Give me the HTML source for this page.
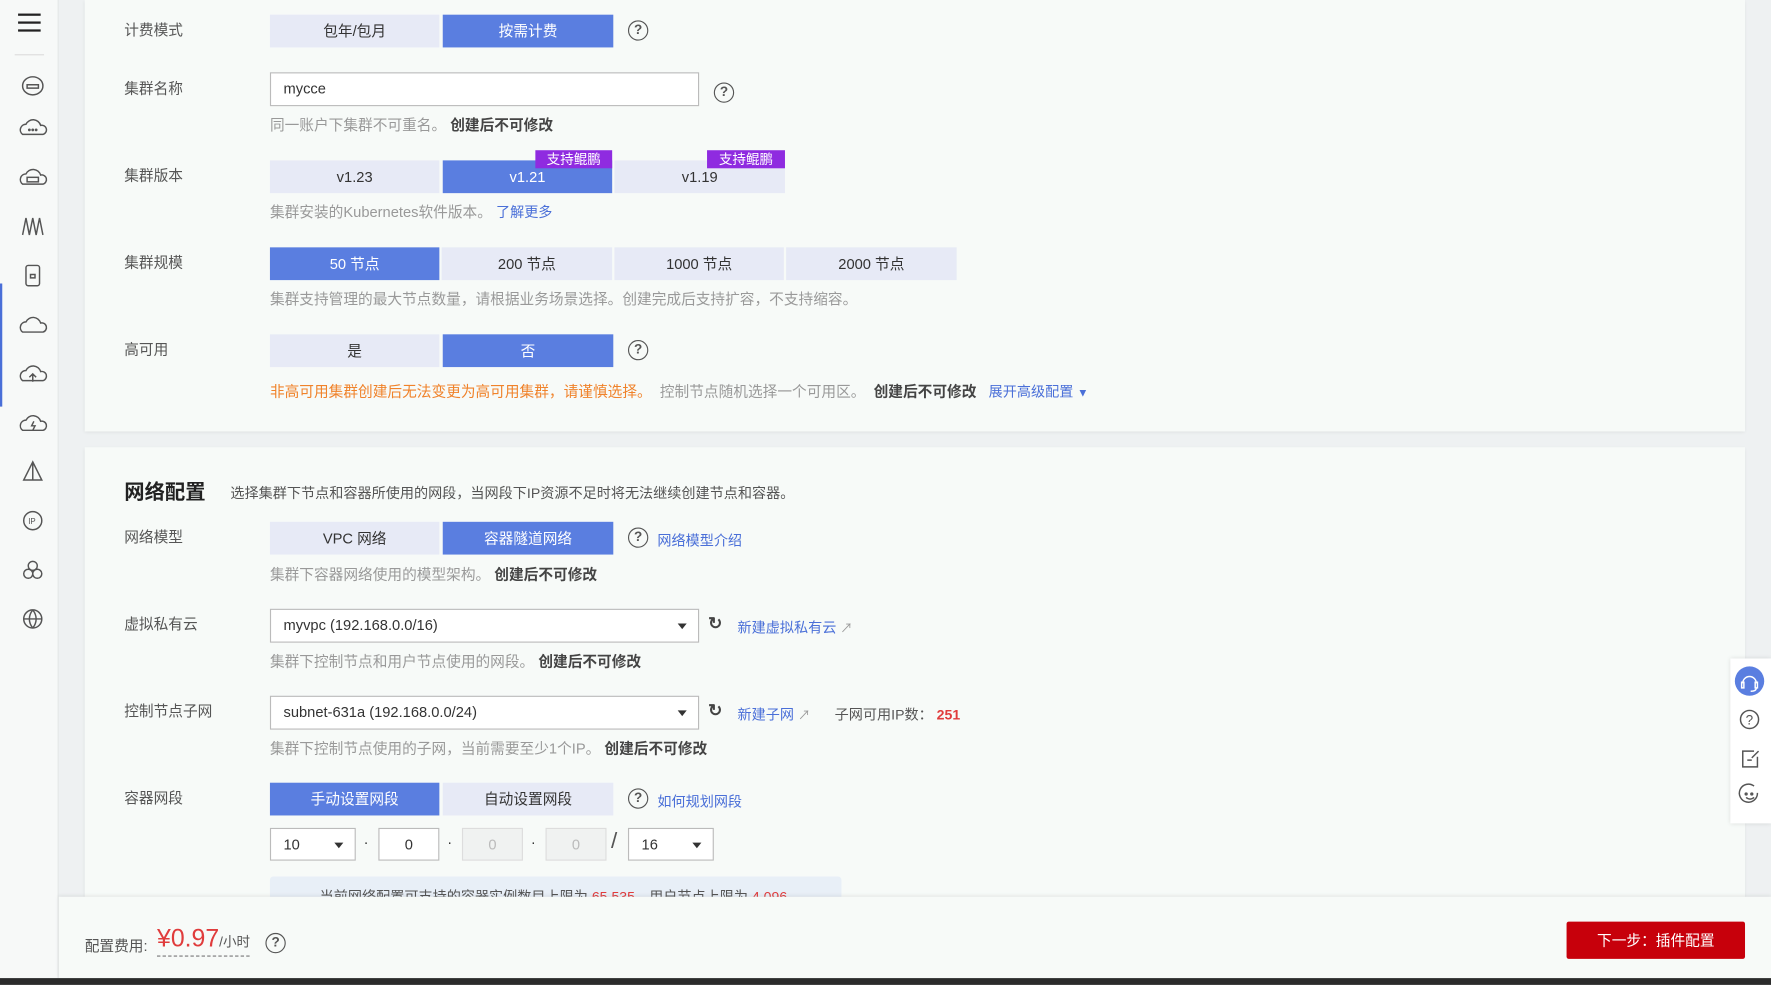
<!DOCTYPE html>
<html><head><meta charset="utf-8"><style>
*{box-sizing:border-box;margin:0;padding:0}
html,body{width:1771px;height:985px;overflow:hidden;background:#eef1f2}
#w{position:absolute;left:0;top:0;width:1568px;height:872px;transform:scale(1.12946);transform-origin:0 0;font-family:"Liberation Sans","Noto Sans CJK SC",sans-serif;font-size:13px;color:#333}
.a{position:absolute}
.card{position:absolute;left:75px;width:1470px;background:#f7faf8;box-shadow:0 1px 3px rgba(0,0,0,.08)}
.lbl{position:absolute;left:110px;color:#555;font-size:13px;line-height:16px}
.b{position:absolute;height:29px;line-height:29px;text-align:center;background:#e7eaf6;color:#333;font-size:13px}
.b.on{background:#5a7ee0;color:#fff}
.hint{position:absolute;left:239px;color:#999;font-size:13px;line-height:16px;white-space:nowrap}
.hint b{color:#444}
.lk{color:#4a6fd8;font-size:12.5px}
.q{position:absolute;width:18px;height:18px;border:1.5px solid #555;border-radius:50%;font-size:12px;line-height:15px;text-align:center;color:#555;font-weight:bold}
.inp{position:absolute;height:30px;border:1px solid #bbb;background:#fff;padding-left:11px;line-height:28px;font-size:13px}
.tag{position:absolute;height:16px;line-height:16px;background:#8f2be0;color:#fff;font-size:12px;text-align:center;width:68px}
.ar{position:absolute;right:10px;top:12px;border-left:4px solid transparent;border-right:4px solid transparent;border-top:5px solid #333}
</style></head><body><div id="w">
<div class="a" style="left:0;top:0;width:52px;height:866px;background:#f7f9f8;border-right:1px solid #e3e6e6"></div>
<div class="a" style="left:16px;top:12px;width:20px;height:2px;background:#222;box-shadow:0 7px 0 #222,0 14px 0 #222"></div>
<div class="a" style="left:13px;top:48px;width:26px;height:1px;background:#ddd"></div>
<div class="a" style="left:0;top:251px;width:2px;height:109px;background:#4a6fd8"></div>
<svg class="a" style="left:0;top:0" width="52" height="560" fill="none" stroke="#555" stroke-width="1.3">
<path d="M20 76a9 8 0 0 1 18 0a9 8 0 0 1-18 0zM24 75h10v3h-10z"/>
<path d="M20 119a5 5 0 0 1 3-9a7 7 0 0 1 13 1a4 4 0 0 1 2 8z"/><circle cx="26" cy="115" r=".6"/><circle cx="29" cy="115" r=".6"/><circle cx="32" cy="115" r=".6"/>
<path d="M20 163a5 5 0 0 1 3-9a7 7 0 0 1 13 1a4 4 0 0 1 2 8z"/><rect x="24" y="157" width="10" height="4"/>
<path d="M20 208l3-15 3 15 3-15 3 15 3-15 3 15"/>
<rect x="23" y="235" width="12" height="18" rx="2"/><path d="M27 246h4v-3h-4z"/>
<path d="M20 294a5 5 0 0 1 3-9a7 7 0 0 1 13 1a4 4 0 0 1 2 8z"/>
<path d="M20 337a5 5 0 0 1 3-9a7 7 0 0 1 13 1a4 4 0 0 1 2 8z M29 338v-7m-3 3l3-3 3 3"/>
<path d="M20 381a5 5 0 0 1 3-9a7 7 0 0 1 13 1a4 4 0 0 1 2 8z M30 373l-2 4h3l-2 4"/>
<path d="M29 409l-8 16h16z M29 409v16"/>
<circle cx="29" cy="461" r="8"/><text x="25" y="464" font-size="7" fill="#555" stroke="none">IP</text>
<circle cx="25" cy="508" r="4"/><circle cx="33" cy="508" r="4"/><circle cx="29" cy="501" r="4"/>
<circle cx="29" cy="548" r="8"/><path d="M21 548h16M29 540c-4 5-4 11 0 16M29 540c4 5 4 11 0 16"/>
</svg>
<div class="card" style="top:0;height:382px"></div>
<div class="lbl" style="top:19px">计费模式</div>
<div class="b" style="left:239px;top:13px;width:150px">包年/包月</div>
<div class="b on" style="left:392px;top:13px;width:151px">按需计费</div>
<div class="q" style="left:556px;top:18px">?</div>
<div class="lbl" style="top:71px">集群名称</div>
<div class="inp" style="left:239px;top:64px;width:380px">mycce</div>
<div class="q" style="left:632px;top:73px">?</div>
<div class="hint" style="top:103px">同一账户下集群不可重名。 <b>创建后不可修改</b></div>
<div class="lbl" style="top:148px">集群版本</div>
<div class="b" style="left:239px;top:142px;width:150px">v1.23</div>
<div class="b on" style="left:392px;top:142px;width:150px">v1.21</div>
<div class="b" style="left:544px;top:142px;width:151px">v1.19</div>
<div class="tag" style="left:474px;top:133px">支持鲲鹏</div>
<div class="tag" style="left:626px;top:133px;width:69px">支持鲲鹏</div>
<div class="hint" style="top:180px">集群安装的Kubernetes软件版本。 <span class="lk">了解更多</span></div>
<div class="lbl" style="top:225px">集群规模</div>
<div class="b on" style="left:239px;top:219px;width:150px">50 节点</div>
<div class="b" style="left:391px;top:219px;width:151px">200 节点</div>
<div class="b" style="left:544px;top:219px;width:150px">1000 节点</div>
<div class="b" style="left:696px;top:219px;width:151px">2000 节点</div>
<div class="hint" style="top:257px">集群支持管理的最大节点数量，请根据业务场景选择。创建完成后支持扩容，不支持缩容。</div>
<div class="lbl" style="top:302px">高可用</div>
<div class="b" style="left:239px;top:296px;width:150px">是</div>
<div class="b on" style="left:392px;top:296px;width:151px">否</div>
<div class="q" style="left:556px;top:301px">?</div>
<div class="hint" style="top:339px"><span style="color:#f0822a">非高可用集群创建后无法变更为高可用集群，请谨慎选择。</span> &nbsp;控制节点随机选择一个可用区。 &nbsp;<b>创建后不可修改</b> &nbsp; <span class="lk">展开高级配置 <span style="font-size:10px">▼</span></span></div>
<div class="card" style="top:396px;height:420px"></div>
<div class="a" style="left:110px;top:422px;font-size:18px;font-weight:bold;color:#222">网络配置</div>
<div class="a" style="left:204px;top:426px;color:#555;font-size:12.5px">选择集群下节点和容器所使用的网段，当网段下IP资源不足时将无法继续创建节点和容器。</div>
<div class="lbl" style="top:468px">网络模型</div>
<div class="b" style="left:239px;top:462px;width:150px">VPC 网络</div>
<div class="b on" style="left:392px;top:462px;width:151px">容器隧道网络</div>
<div class="q" style="left:556px;top:467px">?</div>
<div class="a lk" style="left:582px;top:468px">网络模型介绍</div>
<div class="hint" style="top:501px">集群下容器网络使用的模型架构。 <b>创建后不可修改</b></div>
<div class="lbl" style="top:545px">虚拟私有云</div>
<div class="inp" style="left:239px;top:539px;width:380px">myvpc (192.168.0.0/16)<span class="ar"></span></div>
<div class="a" style="left:627px;top:543px;font-size:15px;color:#444;font-weight:bold">↻</div>
<div class="a lk" style="left:653px;top:545px">新建虚拟私有云 <span style="font-size:11px;color:#999">↗</span></div>
<div class="hint" style="top:578px">集群下控制节点和用户节点使用的网段。 <b>创建后不可修改</b></div>
<div class="lbl" style="top:622px">控制节点子网</div>
<div class="inp" style="left:239px;top:616px;width:380px">subnet-631a (192.168.0.0/24)<span class="ar"></span></div>
<div class="a" style="left:627px;top:620px;font-size:15px;color:#444;font-weight:bold">↻</div>
<div class="a lk" style="left:653px;top:622px">新建子网 <span style="font-size:11px;color:#999">↗</span></div>
<div class="a" style="left:739px;top:622px;color:#555;font-size:12.5px">子网可用IP数： <b style="color:#e03c3c">251</b></div>
<div class="hint" style="top:655px">集群下控制节点使用的子网，当前需要至少1个IP。 <b>创建后不可修改</b></div>
<div class="lbl" style="top:699px">容器网段</div>
<div class="b on" style="left:239px;top:693px;width:150px">手动设置网段</div>
<div class="b" style="left:392px;top:693px;width:151px">自动设置网段</div>
<div class="q" style="left:556px;top:698px">?</div>
<div class="a lk" style="left:582px;top:699px">如何规划网段</div>
<div class="inp" style="left:239px;top:733px;width:76px;height:29px">10<span class="ar"></span></div>
<div class="a" style="left:322px;top:738px">·</div>
<div class="inp" style="left:335px;top:733px;width:54px;height:29px;padding:0;text-align:center">0</div>
<div class="a" style="left:396px;top:738px">·</div>
<div class="inp" style="left:409px;top:733px;width:54px;height:29px;padding:0;text-align:center;background:#f0f2f1;border-color:#ddd;color:#bbb">0</div>
<div class="a" style="left:470px;top:738px">·</div>
<div class="inp" style="left:483px;top:733px;width:54px;height:29px;padding:0;text-align:center;background:#f0f2f1;border-color:#ddd;color:#bbb">0</div>
<div class="a" style="left:541px;top:734px;font-size:20px;color:#555">/</div>
<div class="inp" style="left:556px;top:733px;width:76px;height:29px">16<span class="ar"></span></div>
<div class="a" style="left:239px;top:776px;width:506px;height:30px;background:#e8eff7;border-radius:3px;padding:7px 0 0 44px;color:#555;font-size:12.5px">当前网络配置可支持的容器实例数目上限为 <span style="color:#e03c3c">65,535</span>，用户节点上限为 <span style="color:#e03c3c">4,096</span></div>
<div class="a" style="left:52px;top:794px;width:1516px;height:72px;background:#f7faf8;box-shadow:0 -1px 3px rgba(0,0,0,.08)"></div>
<div class="a" style="left:75px;top:827px;color:#555">配置费用:</div>
<div class="a" style="left:139px;top:819px;color:#e03c3c;font-size:22px;border-bottom:1px dashed #777;line-height:24px">¥0.97<span style="font-size:12px;color:#555">/小时</span></div>
<div class="q" style="left:235px;top:826px">?</div>
<div class="a" style="left:1387px;top:816px;width:158px;height:33px;background:#c7000b;color:#fff;text-align:center;line-height:33px;border-radius:2px">下一步：插件配置</div>
<div class="a" style="left:0;top:866px;width:1568px;height:6px;background:#2b2b2b"></div>
<div class="a" style="left:1532px;top:583px;width:36px;height:146px;background:#fff;box-shadow:0 0 4px rgba(0,0,0,.12)"></div>
<div class="a" style="left:1536px;top:590px;width:26px;height:26px;border-radius:50%;background:#5a7ee0"></div>
<svg class="a" style="left:1532px;top:583px" width="36" height="146" fill="none" stroke-width="1.3">
<path d="M11 22a6 6 0 0 1 12 0M10 21h2v5h-2zM22 21h2v5h-2zM23 26c0 2-2 3-5 3" stroke="#fff"/>
<circle cx="17" cy="54" r="8" stroke="#555"/><text x="13.5" y="58.5" font-size="12" fill="#555" stroke="none">?</text>
<path d="M21 82h-10v14h13v-9M15 90h4M19 88l6-6" stroke="#555"/>
<path d="M24 119a8 8 0 1 1 -3 -6M14 123c2 2 5 2 7 0" stroke="#555"/><circle cx="14" cy="120" r=".8" stroke="#555"/><circle cx="19" cy="120" r=".8" stroke="#555"/>
</svg>
</div></body></html>
